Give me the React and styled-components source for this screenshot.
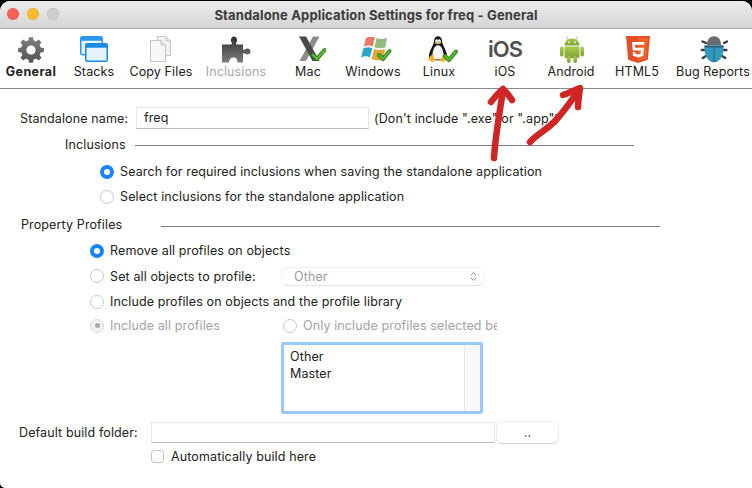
import styled, { createGlobalStyle } from "styled-components";

const GlobalStyle = createGlobalStyle`
  html, body { margin: 0; padding: 0; background: #000; }
  body { font-family: Inter, "Liberation Sans", sans-serif; letter-spacing: 0.12px; }
`;

const gearPath = (cx, cy, teeth, outer, inner) => {
  const pts = [];
  const step = (Math.PI * 2) / teeth;
  for (let i = 0; i < teeth; i++) {
    const a = i * step - Math.PI / 2;
    const w = step * 0.2;
    const g = step * 0.32;
    [
      [a - g, inner],
      [a - w, outer],
      [a + w, outer],
      [a + g, inner],
    ].forEach(([t, r]) => {
      pts.push(`${(cx + r * Math.cos(t)).toFixed(2)},${(cy + r * Math.sin(t)).toFixed(2)}`);
    });
  }
  return pts.join(" ");
};

const Tick = ({ d }) => (
  <>
    <path d={d} fill="none" stroke="#2f7d18" strokeWidth="4" strokeLinecap="round" strokeLinejoin="round" />
    <path d={d} fill="none" stroke="#58b834" strokeWidth="2.2" strokeLinecap="round" strokeLinejoin="round" />
  </>
);

const GearIcon = () => (
  <svg width="28" height="28" viewBox="0 0 28 28">
    <defs>
      <linearGradient id="gearFill" x1="0" y1="0" x2="0" y2="1">
        <stop offset="0" stopColor="#7d7d7d" />
        <stop offset="1" stopColor="#555" />
      </linearGradient>
    </defs>
    <polygon points={gearPath(14, 14, 8, 13, 10)} fill="url(#gearFill)" />
    <circle cx="14" cy="14" r="4.6" fill="#fff" />
  </svg>
);

const StacksIcon = () => (
  <svg width="28" height="26" viewBox="0 0 28 26">
    <rect x="0.75" y="0.75" width="21.5" height="18" rx="2" fill="#e8f4ff" stroke="#2a97ee" strokeWidth="1.5" />
    <rect x="0.75" y="0.75" width="21.5" height="4" rx="1.5" fill="#2a97ee" />
    <rect x="5.75" y="7.75" width="21.5" height="17.5" rx="1.5" fill="#e4f2ff" stroke="#1a8ae8" strokeWidth="1.5" />
    <rect x="5.75" y="7.75" width="21.5" height="4" fill="#1a8ae8" />
  </svg>
);

const CopyIcon = () => (
  <svg width="22" height="26" viewBox="0 0 22 26">
    <path d="M7.5 .5H16L20.5 5V19.5H7.5Z" fill="#f2f2f2" stroke="#c9c9c9" />
    <path d="M16 .5V5H20.5" fill="#ddd" stroke="#c9c9c9" />
    <path d="M.5 4.5H11L15.5 9V25.5H.5Z" fill="#f7f7f7" stroke="#c4c4c4" />
    <path d="M11 4.5V9H15.5" fill="#e2e2e2" stroke="#c4c4c4" />
  </svg>
);

const PuzzleIcon = () => (
  <svg width="30" height="27" viewBox="0 0 30 27">
    <defs>
      <linearGradient id="puzzleFill" x1="0" y1="0" x2="0" y2="1">
        <stop offset="0" stopColor="#2f2f2f" />
        <stop offset="1" stopColor="#7d7d7d" />
      </linearGradient>
    </defs>
    <path
      d="M1 8.5H9.5C11 8.5 11.5 7.5 10.5 6.2C9 4 10.5 .5 13 .5C15.5 .5 17 4 15.5 6.2C14.5 7.5 15 8.5 16.5 8.5H22V12.5C22 14 23 14.2 24.2 13.2C26 11.8 29.5 12.5 29.5 15.5C29.5 18.5 26 19.2 24.2 17.8C23 16.8 22 17 22 18.5V26.5H16.5C16.5 23.5 15.5 21.5 12.5 21.5C9.5 21.5 8 23.5 8 26.5H1Z"
      fill="url(#puzzleFill)"
    />
  </svg>
);

const MacIcon = () => (
  <svg width="36" height="26" viewBox="-9 0 36 26">
    <path d="M14 0.5 H20.5 L7 25 H0.5 Z" fill="#8c8c8c" />
    <path d="M0 0.5 H7 L20.5 25 H13.5 Z" fill="#4a4a4a" />
    <Tick d="M14 19 L18 23 L25.5 14" />
  </svg>
);

const WindowsIcon = () => (
  <svg width="40" height="26" viewBox="-8 0 40 26">
    <path d="M5 2C8 .3 11 .4 14 1.6L11.8 10.5C9 9.2 6 9.2 2.8 10.8Z" fill="#ea7a68" />
    <path d="M15.5 2C19 3.3 22 3.4 26 1.8L24.3 11.5C20.5 12.8 17 12.5 13.4 11Z" fill="#93ba7c" />
    <path d="M2.4 12.5C5.5 11 8.5 11 11.3 12.2L9 21.4C6.2 20 3.2 20 0 21.5Z" fill="#2ca6c6" />
    <path d="M13 12.7C16.5 14.1 20 14.4 24 13L22.2 23.5C18 25 14.5 24.6 10.6 23Z" fill="#dfa835" />
    <Tick d="M18 19 L22 23 L28.5 15" />
  </svg>
);

const TuxIcon = () => (
  <svg width="38" height="27" viewBox="-8 0 38 27">
    <path d="M6 5C6 -1.5 14 -1.5 14 5C14 9 19.5 15 19 21C18.5 25.5 1.5 25.5 1 21C.5 15 6 9 6 5Z" fill="#151515" />
    <path d="M6.5 11.5C8.5 8.5 11.5 8.5 13.5 11.5C16 15.5 16 21 14 23.5H6C4 21 4 15.5 6.5 11.5Z" fill="#f4f4f4" />
    <path d="M7 4.5C8 3.4 12 3.4 13 4.5V7C12 8.5 8 8.5 7 7Z" fill="#c9c9c9" />
    <circle cx="8.6" cy="4.2" r="1" fill="#fff" />
    <circle cx="11.4" cy="4.2" r="1" fill="#fff" />
    <path d="M7.5 6.2H12.5L10 8.2Z" fill="#efb02a" />
    <path d="M0 22.5L4.5 18L7.5 24.5C5 26.8 2 26 0 22.5Z" fill="#efb02a" />
    <path d="M12 24.5L15.5 18L19.5 22.5C18 25.5 14.5 26.8 12 24.5Z" fill="#efb02a" />
    <Tick d="M17 20 L21 24 L28 15.5" />
  </svg>
);

const AndroidIcon = () => (
  <svg width="26" height="27" viewBox="-2 0 26 27">
    <defs>
      <linearGradient id="droidFill" x1="0" y1="0" x2="0" y2="1">
        <stop offset="0" stopColor="#a6cc4e" />
        <stop offset="1" stopColor="#7fa533" />
      </linearGradient>
    </defs>
    <g fill="url(#droidFill)">
      <path d="M4.5 9.5C4.5 5 8 2.5 12 2.5C16 2.5 19.5 5 19.5 9.5Z" />
      <path d="M4.5 10.5H19.5V20.5C19.5 21.5 18.8 22 18 22H6C5.2 22 4.5 21.5 4.5 20.5Z" />
      <rect x="0" y="10.5" width="3.6" height="10" rx="1.8" />
      <rect x="20.4" y="10.5" width="3.6" height="10" rx="1.8" />
      <rect x="7" y="20" width="3.6" height="7" rx="1.8" />
      <rect x="13.4" y="20" width="3.6" height="7" rx="1.8" />
    </g>
    <path d="M8 3.5L6.5 .8M16 3.5L17.5 .8" stroke="#94bb40" strokeWidth=".8" />
    <circle cx="8.8" cy="6.3" r=".9" fill="#fff" />
    <circle cx="15.2" cy="6.3" r=".9" fill="#fff" />
  </svg>
);

const Html5Icon = () => (
  <svg width="26" height="27" viewBox="-2 0 26 27">
    <path d="M0 0H24L21.8 23.8L12 27L2.2 23.8Z" fill="#e44d26" />
    <path d="M12 2V25L20 22.5L21.8 2Z" fill="#f16529" />
    <path d="M6 6H18.4L18.1 8.8H9L9.3 11.8H17.9L17.2 19.8L12 21.4L6.9 19.8L6.6 16H9.3L9.5 17.8L12 18.6L14.6 17.8L14.9 14.5H6.7Z" fill="#fff" />
  </svg>
);

const BugIcon = () => (
  <svg width="32" height="27" viewBox="-4 0 32 27">
    <g stroke="#3c3c3c" strokeWidth="2.4" strokeLinecap="round">
      <path d="M5 7L1.5 5.5M23 7L26 5.5" />
      <path d="M4 14H.8M22 14H25.4" />
      <path d="M5 20L1.8 22M21 20L24.4 22" />
    </g>
    <path d="M6 9C6 3 9.5 .3 13 .3C16.5 .3 20 3 20 9Z" fill="#666b70" />
    <path d="M3.5 9.5H22.5C23.5 17 20 26 13 26.5C6 26 2.5 17 3.5 9.5Z" fill="#3498bd" />
    <path d="M3.5 9.5H22.5L22.6 11.5H3.4Z" fill="#2a5f75" />
    <path d="M13 10V26" stroke="#1b5f7b" strokeWidth="1" />
  </svg>
);

const Window = styled.div`
  position: relative;
  width: 752px;
  height: 487px;
  margin-top: 1px;
  background: #fff;
  border-radius: 10px 10px 0 5px;
  overflow: hidden;
`;

const TitleBar = styled.header`
  position: relative;
  display: flex;
  align-items: center;
  justify-content: center;
  height: 27px;
  background: linear-gradient(#ececec, #d5d5d5);
  border-bottom: 1px solid #a9a9a9;
`;

const Lights = styled.div`
  position: absolute;
  left: 7px;
  top: 7px;
  display: flex;
  gap: 8px;
`;

const Light = styled.span`
  width: 12px;
  height: 12px;
  border-radius: 50%;
  background: ${(p) => p.$color};
  box-shadow: inset 0 0 0 0.5px rgba(0, 0, 0, 0.12);
`;

const Title = styled.h1`
  margin: 0;
  font-size: 13px;
  font-weight: 700;
  letter-spacing: 0.15px;
  color: #3b3b3b;
`;

const Toolbar = styled.nav`
  display: flex;
  height: 59px;
  border-bottom: 1px solid #8a8a8a;
  background: #fff;
`;

const ToolItem = styled.div`
  flex: none;
  width: ${(p) => p.$width}px;
  display: flex;
  flex-direction: column;
  align-items: center;
`;

const ToolIcon = styled.div`
  height: 27px;
  margin-top: 7px;
  display: flex;
  align-items: flex-start;
  justify-content: center;
`;

const IosMark = styled.span`
  font-size: 22px;
  line-height: 27px;
  font-weight: 600;
  letter-spacing: -1px;
  color: #505050;
`;

const ToolLabel = styled.span`
  margin-top: 1px;
  font-size: 12.5px;
  line-height: 16px;
  white-space: nowrap;
  font-weight: ${(p) => (p.$active ? 700 : 400)};
  letter-spacing: ${(p) => (p.$active ? "0.4px" : "0.12px")};
  color: ${(p) => (p.$muted ? "#a8a8a8" : "#222")};
`;

const Form = styled.main`
  display: flex;
  flex-direction: column;
  font-size: 12.5px;
  color: #222;
`;

const Row = styled.div`
  display: flex;
  align-items: center;
  height: ${(p) => p.$h || 25}px;
  margin-top: ${(p) => p.$mt || 0}px;
  padding-left: ${(p) => p.$indent || 0}px;
`;

const Label = styled.span`
  flex: none;
  width: ${(p) => (p.$width ? `${p.$width}px` : "auto")};
  margin-left: ${(p) => p.$gap || 0}px;
  white-space: nowrap;
  color: ${(p) => (p.$muted ? "#a3a3a3" : "inherit")};
`;

const TextField = styled.div`
  flex: none;
  box-sizing: border-box;
  width: ${(p) => p.$width}px;
  height: ${(p) => p.$height}px;
  padding: 0 7px;
  line-height: ${(p) => p.$height - 2}px;
  background: #fff;
  border: 1px solid #e6e6e6;
  border-bottom-color: #bdbdbd;
`;

const Rule = styled.span`
  flex: none;
  width: 499px;
  height: 1px;
  margin-top: ${(p) => p.$drop}px;
  background: #808080;
`;

const RadioDot = styled.span`
  flex: none;
  box-sizing: border-box;
  width: 14px;
  height: 14px;
  margin-right: 6px;
  border-radius: 50%;
  display: flex;
  align-items: center;
  justify-content: center;
  background: ${(p) => (p.$on ? "#1a82fb" : "#fff")};
  border: ${(p) => (p.$on ? "none" : "1px solid #c8c8c8")};
  ${(p) => p.$dim && "background: #f3f3f3; border: 1px solid #d6d6d6;"}
  &::after {
    content: "";
    display: ${(p) => (p.$on || p.$dim ? "block" : "none")};
    width: ${(p) => (p.$dim ? 5 : 6)}px;
    height: ${(p) => (p.$dim ? 5 : 6)}px;
    border-radius: 50%;
    background: ${(p) => (p.$dim ? "#a8a8a8" : "#fff")};
  }
`;

const SelectBox = styled.div`
  flex: none;
  box-sizing: border-box;
  width: 201px;
  height: 17px;
  padding: 0 6px 0 12px;
  display: flex;
  align-items: center;
  justify-content: space-between;
  color: #9c9c9c;
  border-radius: 4px;
  background: #fff;
  box-shadow: 0 0 0 0.5px #e6e6e6, 0 1px 1px rgba(0, 0, 0, 0.12);
`;

const Clip = styled.span`
  flex: none;
  width: 194px;
  overflow: hidden;
  white-space: nowrap;
  color: #a3a3a3;
`;

const ListBox = styled.div`
  flex: none;
  box-sizing: border-box;
  width: 202px;
  height: 72px;
  display: flex;
  justify-content: space-between;
  border: 3px solid #9ac8fa;
  border-radius: 2px;
  background: #fff;
`;

const ListItems = styled.div`
  padding: 3px 6px;
  line-height: 17px;
`;

const ScrollGutter = styled.div`
  width: 15px;
  background: #f8f8f8;
  border-left: 1px solid #e6e6e6;
`;

const DotsButton = styled.div`
  flex: none;
  box-sizing: border-box;
  width: 61px;
  height: 21px;
  margin-left: 2px;
  display: flex;
  align-items: center;
  justify-content: center;
  color: #555;
  border-radius: 5px;
  background: #fff;
  box-shadow: 0 0 0 0.5px #dcdcdc, 0 1px 1px rgba(0, 0, 0, 0.2);
`;

const CheckBox = styled.span`
  flex: none;
  box-sizing: border-box;
  width: 13px;
  height: 13px;
  margin-right: 7px;
  border-radius: 3px;
  border: 1px solid #c4c4c4;
  background: #fff;
`;

const Scribble = styled.svg`
  position: absolute;
  left: 0;
  top: -1px;
  pointer-events: none;
`;

const tools = [
  { label: "General", width: 62, icon: <GearIcon />, active: true },
  { label: "Stacks", width: 64, icon: <StacksIcon /> },
  { label: "Copy Files", width: 70, icon: <CopyIcon /> },
  { label: "Inclusions", width: 80, icon: <PuzzleIcon />, muted: true },
  { label: "Mac", width: 64, icon: <MacIcon /> },
  { label: "Windows", width: 66, icon: <WindowsIcon /> },
  { label: "Linux", width: 66, icon: <TuxIcon /> },
  { label: "iOS", width: 66, icon: <IosMark>iOS</IosMark> },
  { label: "Android", width: 66, icon: <AndroidIcon /> },
  { label: "HTML5", width: 66, icon: <Html5Icon /> },
  { label: "Bug Reports", width: 86, icon: <BugIcon /> },
];

const App = () => {
  return (
    <>
      <GlobalStyle />
      <Window>
        <TitleBar>
          <Lights>
            <Light $color="#fc5f57" />
            <Light $color="#fdbc2e" />
            <Light $color="#cfcfcf" />
          </Lights>
          <Title>Standalone Application Settings for freq - General</Title>
        </TitleBar>
        <Toolbar>
          {tools.map((t) => (
            <ToolItem key={t.label} $width={t.width}>
              <ToolIcon>{t.icon}</ToolIcon>
              <ToolLabel $active={t.active} $muted={t.muted}>
                {t.label}
              </ToolLabel>
            </ToolItem>
          ))}
        </Toolbar>
        <Form>
          <Row $h={22} $mt={18} $indent={20}>
            <Label $width={116}>Standalone name:</Label>
            <TextField $width={233} $height={22}>
              freq
            </TextField>
            <Label $gap={5}>(Don't include ".exe" or ".app")</Label>
          </Row>
          <Row $h={18} $mt={6} $indent={65}>
            <Label $width={70}>Inclusions</Label>
            <Rule $drop={2} />
          </Row>
          <Row $mt={6} $indent={100}>
            <RadioDot $on />
            <Label>Search for required inclusions when saving the standalone application</Label>
          </Row>
          <Row $indent={100}>
            <RadioDot />
            <Label>Select inclusions for the standalone application</Label>
          </Row>
          <Row $h={18} $mt={6} $indent={21}>
            <Label $width={140}>Property Profiles</Label>
            <Rule $drop={4} />
          </Row>
          <Row $mt={5} $indent={90}>
            <RadioDot $on />
            <Label>Remove all profiles on objects</Label>
          </Row>
          <Row $h={26} $indent={90}>
            <RadioDot />
            <Label $width={172}>Set all objects to profile:</Label>
            <SelectBox>
              <span>Other</span>
              <svg width="7" height="11" viewBox="0 0 7 11">
                <path d="M1 4L3.5 1.5L6 4M1 7L3.5 9.5L6 7" fill="none" stroke="#8f8f8f" strokeWidth="1" />
              </svg>
            </SelectBox>
          </Row>
          <Row $indent={90}>
            <RadioDot />
            <Label>Include profiles on objects and the profile library</Label>
          </Row>
          <Row $h={23} $indent={90}>
            <RadioDot $dim />
            <Label $muted $width={173}>
              Include all profiles
            </Label>
            <RadioDot />
            <Clip>Only include profiles selected below</Clip>
          </Row>
          <Row $h={72} $mt={5} $indent={281}>
            <ListBox>
              <ListItems>
                Other
                <br />
                Master
              </ListItems>
              <ScrollGutter />
            </ListBox>
          </Row>
          <Row $h={21} $mt={8} $indent={19}>
            <Label $width={132}>Default build folder:</Label>
            <TextField $width={344} $height={21} />
            <DotsButton>..</DotsButton>
          </Row>
          <Row $h={20} $mt={3} $indent={151}>
            <CheckBox />
            <Label>Automatically build here</Label>
          </Row>
        </Form>
        <Scribble width="752" height="488" viewBox="0 0 752 488">
          <g fill="none" stroke="#d02525" strokeWidth="6.5" strokeLinecap="round" strokeLinejoin="round">
            <path d="M494 158C495 140 499 115 503 91" />
            <path d="M491 102C495 97 499 92 503 89C506 92 510 97 512 100" />
            <path d="M530 142C537 134 548 129 556 120C565 110 572 100 578 91" />
            <path d="M563 95C569 93 575 90 580 88C579 95 578 102 578 107" />
          </g>
        </Scribble>
      </Window>
    </>
  );
};

export default App;
